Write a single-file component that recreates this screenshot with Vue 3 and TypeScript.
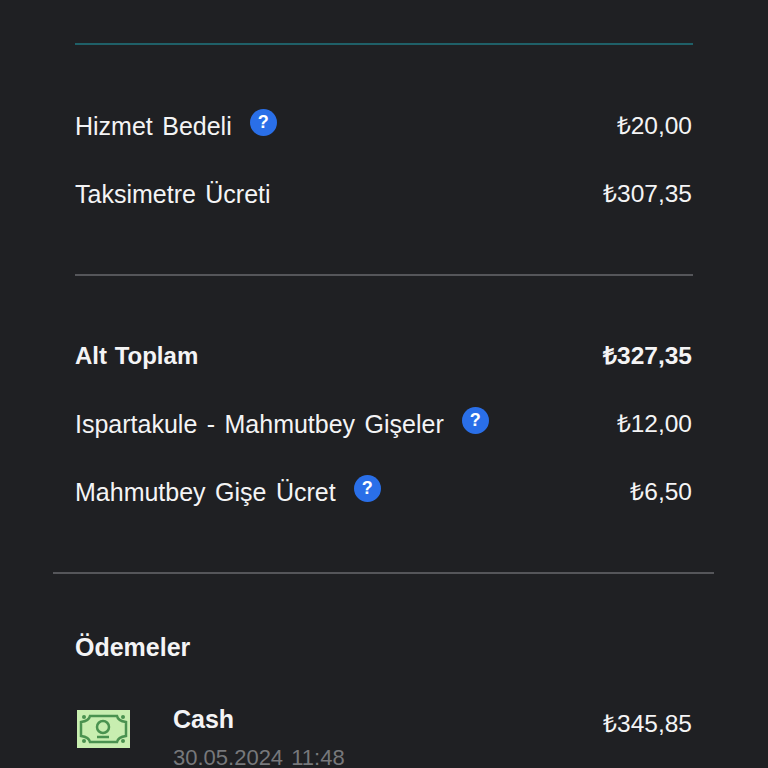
<script setup lang="ts">
interface Line { label: string; amount: string; help?: boolean; strong?: boolean }

const fees: Line[] = [
  { label: 'Hizmet Bedeli', amount: '₺20,00', help: true },
  { label: 'Taksimetre Ücreti', amount: '₺307,35' },
]
const totals: Line[] = [
  { label: 'Alt Toplam', amount: '₺327,35', strong: true },
  { label: 'Ispartakule - Mahmutbey Gişeler', amount: '₺12,00', help: true },
  { label: 'Mahmutbey Gişe Ücret', amount: '₺6,50', help: true },
]
</script>

<template>
  <div class="page">
    <div class="inner">
      <hr class="rule teal" />
      <section class="group">
        <div v-for="row in fees" :key="row.label" class="row">
          <span class="label">
            {{ row.label }}
            <span v-if="row.help" class="help">?</span>
          </span>
          <span class="amount">{{ row.amount }}</span>
        </div>
      </section>
      <hr class="rule" />
      <section class="group tight">
        <div v-for="row in totals" :key="row.label" class="row" :class="{ strong: row.strong }">
          <span class="label">
            {{ row.label }}
            <span v-if="row.help" class="help">?</span>
          </span>
          <span class="amount">{{ row.amount }}</span>
        </div>
      </section>
    </div>
    <hr class="rule wide" />
    <div class="inner">
      <h2 class="title">Ödemeler</h2>
      <div class="payment">
        <svg class="cash" width="53" height="38" viewBox="0 0 53 38">
          <rect width="53" height="38" fill="#c8eeb0" />
          <path d="M13 6H40Q41 11 49 12V26Q41 27 40 32H13Q12 27 4 26V12Q12 11 13 6Z" fill="none" stroke="#4a9250" stroke-width="2.5" />
          <circle cx="26" cy="17" r="6" fill="none" stroke="#4a9250" stroke-width="2.5" />
          <path d="M20 27H32" stroke="#4a9250" stroke-width="2.5" />
          <g fill="#4a9250">
            <circle cx="7" cy="7" r="2" /><circle cx="46" cy="7" r="2" />
            <circle cx="7" cy="31" r="2" /><circle cx="46" cy="31" r="2" />
          </g>
        </svg>
        <div class="info">
          <div class="method">Cash</div>
          <div class="date">30.05.2024 11:48</div>
        </div>
        <span class="amount paid">₺345,85</span>
      </div>
    </div>
  </div>
</template>

<style>
html, body { background: #1f2023; }
</style>

<style scoped>
.page {
  width: 768px;
  height: 768px;
  overflow: hidden;
  background: #1f2023;
  color: #f4f4f5;
  font-family: "Liberation Sans", Arial, sans-serif;
  font-size: 25px;
  line-height: 28px;
  padding-top: 43px;
  box-sizing: border-box;
}
.inner {
  padding: 0 75px;
}
.rule {
  margin: 0;
  border: 0;
  height: 2px;
  background: #55565a;
}
.rule.teal {
  background: #1f6068;
}
.rule.wide {
  margin: 0 54px 0 53px;
}
.group {
  padding: 47px 1px 46px 0;
}
.group.tight {
  padding-top: 46px;
}
.row {
  height: 68px;
  display: flex;
  align-items: center;
  justify-content: space-between;
}
.label {
  display: flex;
  align-items: center;
  word-spacing: 2.5px;
}
.amount {
  font-size: 24.5px;
}
.help {
  width: 27px;
  height: 27px;
  margin: -8px 0 0 18px;
  border-radius: 50%;
  background: #2a6fe8;
  color: #fff;
  font-size: 18px;
  font-weight: 700;
  display: flex;
  align-items: center;
  justify-content: center;
}
.strong {
  font-weight: 700;
}
.strong .label {
  font-size: 24px;
  word-spacing: 1px;
}
.title {
  margin: 0;
  padding-top: 59px;
  font-size: 25px;
  line-height: 28px;
  font-weight: 700;
}
.payment {
  display: flex;
  align-items: flex-start;
  margin-top: 44px;
  padding-right: 1px;
}
.cash {
  margin: 5px 0 0 2px;
  flex: none;
}
.info {
  margin-left: 43px;
  flex: 1;
}
.method {
  font-weight: 700;
  line-height: 28px;
}
.date {
  margin-top: 11px;
  font-size: 22px;
  word-spacing: 2px;
  line-height: 28px;
  color: #77787b;
}
.paid {
  margin-top: 5px;
}
</style>
